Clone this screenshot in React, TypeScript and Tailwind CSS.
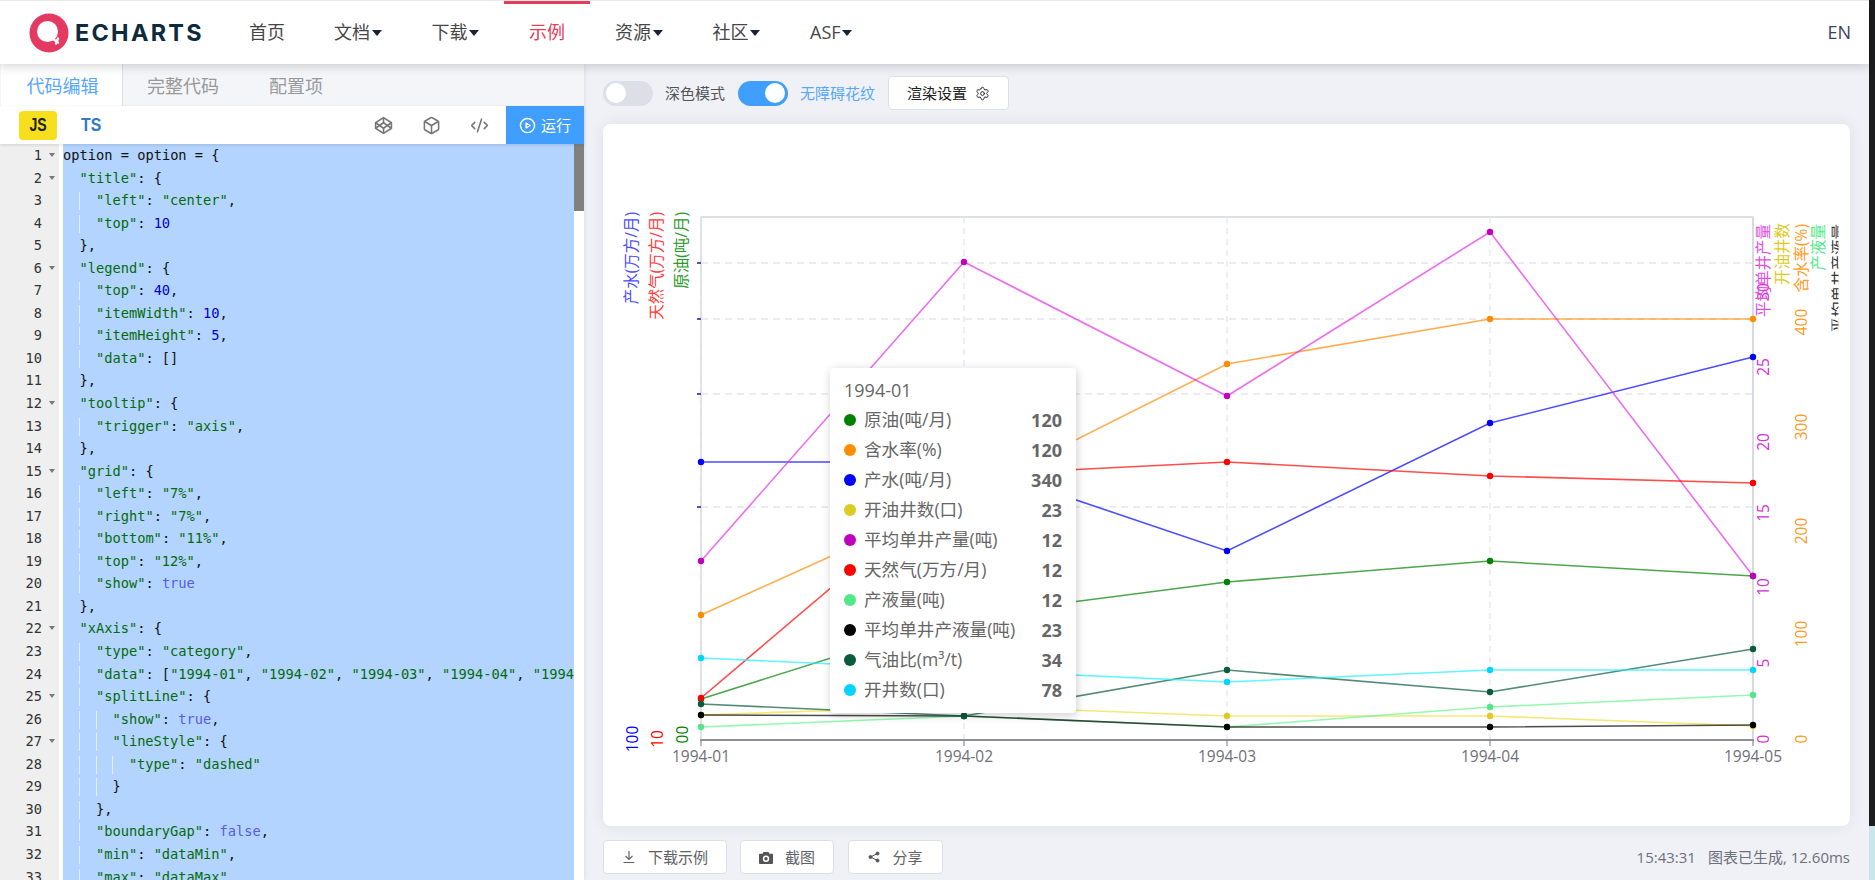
import React from "react";
import { Settings } from "lucide-react";

const CODE: string[] = [
  'option = option = {',
  '  "title": {',
  '    "left": "center",',
  '    "top": 10',
  '  },',
  '  "legend": {',
  '    "top": 40,',
  '    "itemWidth": 10,',
  '    "itemHeight": 5,',
  '    "data": []',
  '  },',
  '  "tooltip": {',
  '    "trigger": "axis",',
  '  },',
  '  "grid": {',
  '    "left": "7%",',
  '    "right": "7%",',
  '    "bottom": "11%",',
  '    "top": "12%",',
  '    "show": true',
  '  },',
  '  "xAxis": {',
  '    "type": "category",',
  '    "data": ["1994-01", "1994-02", "1994-03", "1994-04", "1994-05"],',
  '    "splitLine": {',
  '      "show": true,',
  '      "lineStyle": {',
  '        "type": "dashed"',
  '      }',
  '    },',
  '    "boundaryGap": false,',
  '    "min": "dataMin",',
  '    "max": "dataMax",',
];
const FOLD = new Set([1, 2, 6, 12, 15, 22, 25, 27]);

function Tokens({ text }: { text: string }) {
  const parts = text.split(/("[^"]*"|\b\d+\b|\btrue\b|\bfalse\b)/);
  return (
    <>
      {parts.map((p, i) => {
        if (p.startsWith('"')) return <span key={i} className="text-[#056b0c]">{p}</span>;
        if (/^\d+$/.test(p)) return <span key={i} className="text-[#0000cd]">{p}</span>;
        if (p === "true" || p === "false") return <span key={i} className="text-[#5a5ae6]">{p}</span>;
        return <span key={i} className="text-[#111]">{p}</span>;
      })}
    </>
  );
}

function CodeLine({ text }: { text: string }) {
  const n = text.length - text.trimStart().length;
  const levels = Math.floor(n / 2);
  return (
    <div className="h-[22.56px] leading-[22.56px] whitespace-pre">
      {Array.from({ length: levels }).map((_, i) => (
        <span
          key={i}
          className={
            i === 0
              ? "inline-block h-[18px] w-[2ch] align-middle"
              : "inline-block h-[18px] w-[2ch] border-l border-[#e2edfd] align-middle"
          }
        />
      ))}
      <Tokens text={text.trimStart()} />
    </div>
  );
}

const CATS = ["1994-01", "1994-02", "1994-03", "1994-04", "1994-05"];
const XS = [701, 964, 1227, 1490, 1753];
const SERIES: { c: string; y: number[] }[] = [
  { c: "#008000", y: [699, 616, 582, 561, 576] },
  { c: "#ff8c00", y: [615, 496, 364, 319, 319] },
  { c: "#0000ff", y: [462, 462, 551, 423, 357] },
  { c: "#dccb23", y: [715, 706, 716, 716, 726] },
  { c: "#c000c0", y: [561, 262, 396, 232, 576] },
  { c: "#ff0000", y: [698, 475, 462, 476, 483] },
  { c: "#52e88a", y: [727, 716, 727, 707, 695] },
  { c: "#000000", y: [715, 716, 727, 727, 725] },
  { c: "#0a5a3c", y: [704, 716, 670, 692, 649] },
  { c: "#00d5ff", y: [658, 670, 682, 670, 670] },
];
const LINE: Record<string, string> = {
  "#c000c0": "#e62ee6",
  "#00d5ff": "#1ff0ff",
  "#52e88a": "#66f58f",
  "#dccb23": "#efdf3a",
};
const HGRID = [263, 319, 394, 507];

function VText({ x, y, fill, anchor = "middle", children, size = 15.5 }: { x: number; y: number; fill: string; anchor?: "middle" | "end" | "start"; children: React.ReactNode; size?: number }) {
  return (
    <text
      transform={`translate(${x} ${y}) rotate(-90)`}
      textAnchor={anchor}
      dominantBaseline="central"
      fontSize={size}
      fill={fill}
    >
      {children}
    </text>
  );
}

function Chart() {
  return (
    <svg className="absolute inset-0 h-full w-full" viewBox="603 124 1247 702">
      <defs>
        <clipPath id="clipBlack">
          <rect x="1831.5" y="200" width="7" height="150" />
        </clipPath>
        <clipPath id="clipGreen">
          <rect x="660" y="700" width="40" height="44.500" />
        </clipPath>
      </defs>
      <rect x="701" y="217" width="1052" height="523" fill="none" stroke="#d4d6dc" strokeWidth="1.5" />
      {HGRID.map((y) => (
        <line key={y} x1="701" x2="1753" y1={y} y2={y} stroke="#e3e6ee" strokeWidth="1.5" strokeDasharray="7 5" />
      ))}
      {XS.slice(0, 4).map((x) => (
        <line key={x} x1={x} x2={x} y1="217" y2="740" stroke="#e0e6f1" strokeWidth="1.2" strokeDasharray="6 5" />
      ))}
      <line x1="1753" x2="1753" y1="217" y2="740" stroke="#d8dae2" strokeWidth="2" />
      {HGRID.map((y) => (
        <line key={y} x1="697" x2="701" y1={y} y2={y} stroke="#3a1fa0" strokeWidth="1.6" />
      ))}
      <line x1="700" x2="1754" y1="740" y2="740" stroke="#8c8d96" strokeWidth="1.8" />
      {XS.map((x) => (
        <line key={x} x1={x} x2={x} y1="740" y2="746" stroke="#8c8d96" strokeWidth="1.2" />
      ))}
      {SERIES.map((s) => (
        <polyline
          key={s.c}
          points={s.y.map((y, i) => `${XS[i]},${y}`).join(" ")}
          fill="none"
          stroke={LINE[s.c] ?? s.c}
          strokeOpacity="0.7"
          strokeWidth="1.6"
        />
      ))}
      {SERIES.map((s) =>
        s.y.map((y, i) => <circle key={s.c + i} cx={XS[i]} cy={y} r="3.2" fill={s.c} />)
      )}
      {CATS.map((c, i) => (
        <text key={c} x={XS[i]} y="756" textAnchor="middle" dominantBaseline="central" fontSize="15.5" fill="#6e7079">
          {c}
        </text>
      ))}

      <VText x={631} y={212} fill="#4b4bff" anchor="end">产水(万方/月)</VText>
      <VText x={656} y={212} fill="#ff3b3b" anchor="end">天然气(万方/月)</VText>
      <VText x={681} y={212} fill="#2a9a2a" anchor="end">原油(吨/月)</VText>
      <VText x={632} y={739} fill="#0000ff">100</VText>
      <VText x={657} y={739} fill="#ff0000">10</VText>
      <g clipPath="url(#clipGreen)">
        <VText x={682} y={739} fill="#008000">100</VText>
      </g>

      {[0, 5, 10, 15, 20, 25, 30].map((v, i) => (
        <VText key={v} x={1763} y={[739, 663, 587, 513, 442, 367, 292][i]} fill="#d62ed6">{v}</VText>
      ))}
      {[0, 100, 200, 300, 400].map((v, i) => (
        <VText key={v} x={1801} y={[739, 634, 531, 427, 322][i]} fill="#ff9a1f">{v}</VText>
      ))}
      <VText x={1763} y={224} fill="#e04ee0" anchor="end">平均单井产量</VText>
      <VText x={1782} y={223} fill="#dccb23" anchor="end">开油井数</VText>
      <VText x={1801} y={224} fill="#ff9a1f" anchor="end">含水率(%)</VText>
      <VText x={1818} y={224} fill="#52e88a" anchor="end">产液量</VText>
      <g clipPath="url(#clipBlack)">
        <VText x={1838} y={224} fill="#333" anchor="end">平均单井产液量</VText>
      </g>
    </svg>
  );
}

const TIP: [string, string, string][] = [
  ["#008000", "原油(吨/月)", "120"],
  ["#ff8c00", "含水率(%)", "120"],
  ["#0000ff", "产水(吨/月)", "340"],
  ["#dccb23", "开油井数(口)", "23"],
  ["#c000c0", "平均单井产量(吨)", "12"],
  ["#ff0000", "天然气(万方/月)", "12"],
  ["#52e88a", "产液量(吨)", "12"],
  ["#000000", "平均单井产液量(吨)", "23"],
  ["#0a5a3c", "气油比(m³/t)", "34"],
  ["#00d5ff", "开井数(口)", "78"],
];

function Tooltip() {
  return (
    <div className="absolute left-[227px] top-[244px] w-[246px] rounded-[4px] bg-white pb-2 pl-[14px] pr-[14px] pt-[7px] text-[17.6px] text-[#666] shadow-[1px_2px_10px_rgba(0,0,0,0.2)]">
      <div className="flex h-[30px] items-center text-[18px] leading-none">1994-01</div>
      {TIP.map(([c, n, v]) => (
        <div key={n} className="flex h-[30px] items-center leading-none">
          <span className="mr-2 h-3 w-3 shrink-0 rounded-full" style={{ backgroundColor: c }} />
          <span className="whitespace-nowrap">{n}</span>
          <span className="ml-auto text-[18px] font-bold">{v}</span>
        </div>
      ))}
    </div>
  );
}

function Caret() {
  return <span className="ml-[1.5px] inline-block h-0 w-0 border-x-[5.5px] border-t-[6px] border-x-transparent border-t-[#14233a]" />;
}

function NavItem({ label, caret, active }: { label: string; caret?: boolean; active?: boolean }) {
  return (
    <div className={active ? "relative flex h-full items-center px-[25px] text-[#e43c59]" : "flex h-full items-center px-[25px]"}>
      {active && <span className="absolute inset-x-0 top-0 h-[3px] bg-[#e43c59]" />}
      <span>{label}</span>
      {caret && <Caret />}
    </div>
  );
}

function Logo() {
  return (
    <div className="flex w-[224px] items-center pl-[29px]">
      <svg width="40" height="40" viewBox="0 0 40 40" className="shrink-0">
        <circle cx="20" cy="20" r="19.5" fill="#e43961" />
        <circle cx="18.5" cy="18.5" r="10.5" fill="#fff" />
        <path d="M24 26l5 3.5M29 25.5l-2 5" stroke="#fff" strokeWidth="2.4" strokeLinecap="round" fill="none" />
      </svg>
      <span className="ml-[6px] font-['Inter',sans-serif] text-[23.4px] font-bold leading-none tracking-[2.3px] text-[#0e2b3d]">ECHARTS</span>
    </div>
  );
}

function IconBtn({ children }: { children: React.ReactNode }) {
  return <div className="flex h-full w-[48px] items-center justify-center text-[#777]">{children}</div>;
}

function Toggle({ on }: { on?: boolean }) {
  return (
    <div className={on ? "flex h-[25px] w-[50px] items-center justify-end rounded-full bg-[#409eff] px-[3px]" : "flex h-[25px] w-[50px] items-center rounded-full bg-[#dcdfe6] px-[3px]"}>
      <span className="h-5 w-5 rounded-full bg-white" />
    </div>
  );
}

function FootBtn({ w, children }: { w: string; children: React.ReactNode }) {
  return (
    <div className={`flex h-[34px] items-center justify-center gap-[12px] rounded-[4px] border border-[#dcdfe6] bg-white text-[15px] text-[#606266] ${w}`}>
      {children}
    </div>
  );
}

export default function App() {
  return (
    <div className="flex h-[880px] w-[1875px] overflow-hidden bg-[#eff1f7] font-['Open_Sans','Noto_Sans_CJK_SC',sans-serif]">
      <div className="flex w-[1869px] flex-col">
        <header className="relative z-20 flex h-[64px] shrink-0 items-center border-t border-[#e8e8e8] bg-white text-[18px] text-[#464646] shadow-[0_2px_10px_rgba(0,0,0,0.18)]">
          <Logo />
          <NavItem label="首页" />
          <div className="-ml-[1px] flex h-full items-center">
            <NavItem label="文档" caret />
            <NavItem label="下载" caret />
            <NavItem label="示例" active />
            <NavItem label="资源" caret />
            <NavItem label="社区" caret />
            <NavItem label="ASF" caret />
          </div>
          <span className="ml-auto pr-[18px] text-[18px] text-[#3a4160]">EN</span>
        </header>

        <div className="flex min-h-0 flex-1">
          <aside className="relative z-10 flex w-[584px] shrink-0 flex-col bg-white shadow-[1px_0_4px_rgba(0,0,0,0.08)]">
            <div className="flex h-[42px] shrink-0 bg-[#f3f5f9] pt-[2px] text-[18px] text-[#999]">
              <div className="ml-[1px] -mt-[2px] flex w-[122px] items-center justify-center border-r border-[#dcdfe6] bg-white pl-[2px] pt-[2px] text-[#57a6ff]">代码编辑</div>
              <div className="-ml-[1px] flex items-center px-[25px]">完整代码</div>
              <div className="flex items-center px-[25px]">配置项</div>
            </div>
            <div className="relative z-10 flex h-[38px] shrink-0 items-center bg-white shadow-[0_1px_3px_rgba(0,0,0,0.12)]">
              <div className="ml-[19px] flex h-[29px] w-[38px] items-center justify-center rounded-[4px] bg-[#f7df1e] font-['Liberation_Sans',sans-serif] text-[18px] font-bold text-[#222]">
                <span className="inline-block scale-x-[0.78]">JS</span>
              </div>
              <div className="ml-[24px] pt-[1px] font-['Liberation_Sans',sans-serif] text-[18px] font-bold text-[#3178c6]">
                <span className="inline-block origin-left scale-x-[0.88]">TS</span>
              </div>
              <div className="ml-auto flex h-full items-center">
                <IconBtn>
                  <svg width="19" height="19" viewBox="0 0 24 24" fill="none" stroke="currentColor" strokeWidth="2" strokeLinejoin="round">
                    <polygon points="12 2 22 8.500 22 15.500 12 22 2 15.500 2 8.500 12 2" />
                    <line x1="12" x2="12" y1="22" y2="15.500" />
                    <polyline points="22 8.500 12 15.500 2 8.500" />
                    <polyline points="2 15.500 12 8.500 22 15.500" />
                    <line x1="12" x2="12" y1="2" y2="8.500" />
                  </svg>
                </IconBtn>
                <IconBtn>
                  <svg width="19" height="19" viewBox="0 0 24 24" fill="none" stroke="currentColor" strokeWidth="2" strokeLinejoin="round">
                    <path d="M21 8a2 2 0 0 0-1-1.73l-7-4a2 2 0 0 0-2 0l-7 4A2 2 0 0 0 3 8v8a2 2 0 0 0 1 1.73l7 4a2 2 0 0 0 2 0l7-4A2 2 0 0 0 21 16Z" />
                    <path d="m3.3 7 8.7 5 8.7-5" />
                    <path d="M12 22V12" />
                  </svg>
                </IconBtn>
                <IconBtn>
                  <svg width="19" height="19" viewBox="0 0 24 24" fill="none" stroke="currentColor" strokeWidth="2" strokeLinecap="round" strokeLinejoin="round">
                    <path d="m18 16 4-4-4-4" />
                    <path d="m6 8-4 4 4 4" />
                    <path d="m14.5 4-5 16" />
                  </svg>
                </IconBtn>
                <div className="ml-[3px] flex h-full w-[78px] items-center justify-center gap-[5px] bg-[#409eff] text-[15px] text-white">
                  <svg width="17" height="17" viewBox="0 0 24 24" fill="none" stroke="currentColor" strokeWidth="2" strokeLinejoin="round">
                    <circle cx="12" cy="12" r="10" />
                    <path d="M10 8.5l5.5 3.5-5.5 3.5z" />
                  </svg>
                  <span>运行</span>
                </div>
              </div>
            </div>
            <div className="flex min-h-0 flex-1 overflow-hidden font-['DejaVu_Sans_Mono',monospace] text-[13.7px]">
              <div className="w-[59px] shrink-0 bg-[#efefef] text-[#333]">
                {CODE.map((_, i) => (
                  <div key={i} className="relative h-[22.56px] pr-[17px] text-right leading-[22.56px]">
                    {i + 1}
                    {FOLD.has(i + 1) && (
                      <span className="absolute right-[4px] top-[9px] h-0 w-0 border-x-[3.5px] border-t-[4px] border-x-transparent border-t-[#777]" />
                    )}
                  </div>
                ))}
              </div>
              <div className="ml-[4px] w-[511px] shrink-0 overflow-hidden bg-[#b3d4fe]">
                {CODE.map((l, i) => (
                  <CodeLine key={i} text={l} />
                ))}
              </div>
              <div className="w-[10px] shrink-0 bg-white">
                <div className="h-[67px] bg-[#808080]" />
              </div>
            </div>
          </aside>

          <main className="flex min-w-0 flex-1 flex-col px-[19px] pt-[12px]">
            <div className="flex h-[34px] shrink-0 items-center text-[15px]">
              <Toggle />
              <span className="ml-[12px] text-[#555]">深色模式</span>
              <span className="ml-[13px]"><Toggle on /></span>
              <span className="ml-[12px] text-[#57a6ff]">无障碍花纹</span>
              <div className="ml-[13px] flex h-[34px] w-[121px] items-center justify-center gap-[8px] rounded-[4px] border border-[#dcdfe6] bg-white text-[#222]">
                <span>渲染设置</span>
                <Settings size={15} strokeWidth={1.5} />
              </div>
            </div>
            <div className="relative mt-[14px] h-[702px] shrink-0 rounded-[8px] bg-white shadow-[0_0_16px_rgba(0,0,0,0.08)]">
              <Chart />
              <Tooltip />
            </div>
            <div className="mt-[14px] flex items-center">
              <FootBtn w="w-[124px]">
                <svg width="14" height="14" viewBox="0 0 14 14" fill="none" stroke="#666" strokeWidth="1.2">
                  <path d="M7 1v8M3.500 6L7 9.500 10.500 6M1.500 12.500h11" />
                </svg>
                <span>下载示例</span>
              </FootBtn>
              <span className="ml-[13px]" />
              <FootBtn w="w-[94px]">
                <svg width="14" height="13" viewBox="0 0 14 13" fill="#555">
                  <path fillRule="evenodd" d="M4.5 1h5l1 1.8H13a1 1 0 0 1 1 1V12a1 1 0 0 1-1 1H1a1 1 0 0 1-1-1V3.800a1 1 0 0 1 1-1h2.500zM7 4.500a3.200 3.200 0 1 0 0 6.400 3.200 3.200 0 0 0 0-6.400zm0 1.500a1.700 1.700 0 1 1 0 3.400 1.700 1.700 0 0 1 0-3.400z" />
                </svg>
                <span>截图</span>
              </FootBtn>
              <span className="ml-[14px]" />
              <FootBtn w="w-[95px]">
                <svg width="12" height="12" viewBox="0 0 12 12" fill="#555" stroke="#555">
                  <path d="M9.500 2.500L2.500 6l7 3.500" fill="none" strokeWidth="1" />
                  <circle cx="9.500" cy="2.500" r="1.500" />
                  <circle cx="2.500" cy="6" r="1.500" />
                  <circle cx="9.500" cy="9.500" r="1.500" />
                </svg>
                <span>分享</span>
              </FootBtn>
              <div className="ml-auto text-[15px] text-[#6e7079]">
                <span>15:43:31</span>
                <span className="ml-[12px]">图表已生成, 12.60ms</span>
              </div>
            </div>
          </main>
        </div>
      </div>
      <div className="flex w-[6px] shrink-0 flex-col">
        <div className="flex-1 bg-[#1a1c1e]" />
        <div className="h-[54px] bg-[#c9e7ea]" />
      </div>
    </div>
  );
}
